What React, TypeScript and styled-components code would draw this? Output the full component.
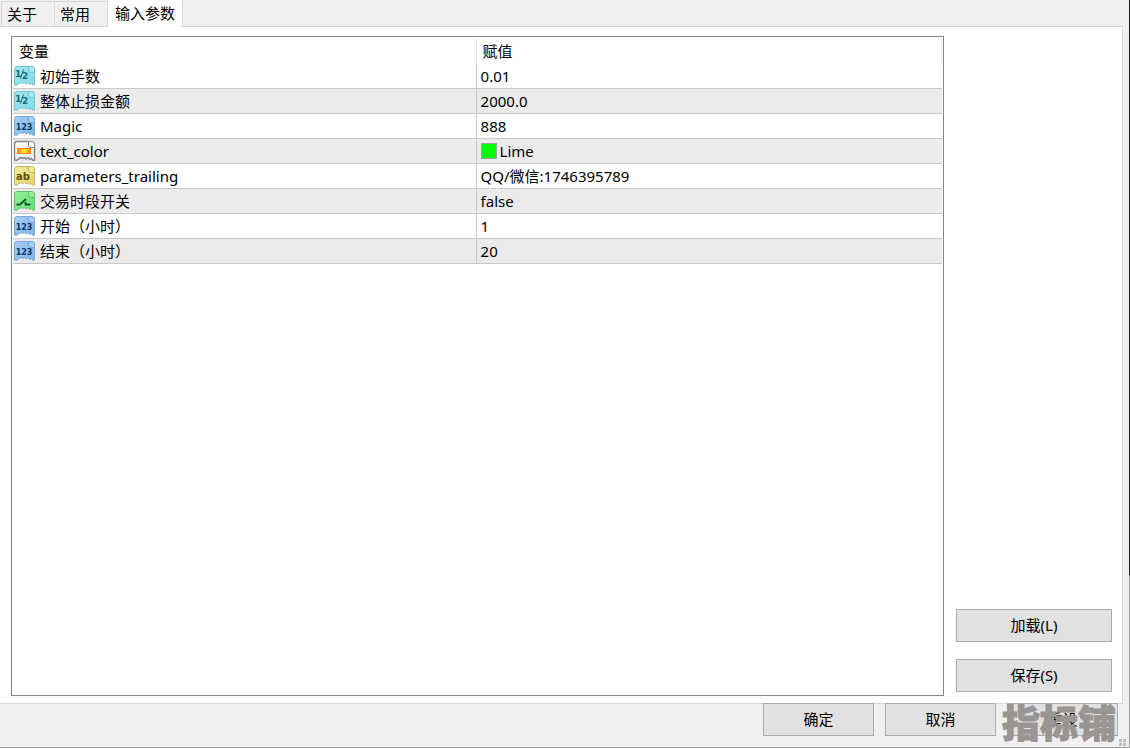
import React from "react";
import styled, { createGlobalStyle, css } from "styled-components";

const GlobalStyle = createGlobalStyle`
  * { box-sizing: border-box; }
  body {
    margin: 0;
    background: #f0f0f0;
    color: #000;
    font: 15px/20px "Noto Sans", "Noto Sans CJK SC", sans-serif;
  }
  button, table { font: inherit; color: inherit; }
`;

const Dialog = styled.main`
  position: relative;
  display: flex;
  flex-direction: column;
  min-height: 100vh;
  overflow: hidden;
  background: #f0f0f0;
  border-bottom: 1px solid #9c9c9c;
`;

const WindowEdge = styled.div`
  position: absolute;
  top: 0;
  right: 0;
  bottom: 0;
  width: 1px;
  background: linear-gradient(#202020 77%, #a0a0a0 77%);
`;

const TabBar = styled.div`
  display: flex;
  align-items: flex-end;
  height: 26px;
  padding-left: 1px;
`;

const Tab = styled.button<{ $active?: boolean }>`
  height: 25px;
  padding: 0 17px 0 5px;
  border: 1px solid #d9d9d9;
  border-width: 1px 0 0 1px;
  background: #f0f0f0;
  line-height: 24px;
  white-space: nowrap;
  ${(p) =>
    p.$active &&
    css`
      position: relative;
      height: 27px;
      margin-bottom: -1px;
      padding: 0 7px 2px;
      border-width: 0 1px 0 1px;
      background: #fff;
    `}
`;

const Panel = styled.section`
  display: flex;
  flex: 1;
  gap: 12px;
  margin-right: 7px;
  padding: 9px 10px 7px 11px;
  border: 1px solid #d9d9d9;
  border-left: 0;
  background: #fff;
`;

const ListBox = styled.div`
  flex: 1;
  padding: 1px;
  border: 1px solid #828790;
`;

const ParamTable = styled.table`
  width: 100%;
  table-layout: fixed;
  border-collapse: separate;
  border-spacing: 0;
  text-align: left;
`;

const HeadCell = styled.th`
  height: 26px;
  padding: 0 6px;
  border-right: 1px solid #e5e5e5;
  font-weight: 400;

  &:first-child {
    width: calc(50% - 1px);
  }
`;

const NameColumn = styled.col`
  width: 49.9%;
`;

const Row = styled.tr`
  &:nth-child(even) { background: #ebebeb; }
`;

const Cell = styled.td`
  height: 25px;
  padding: 0 4px;
  border-bottom: 1px solid #c8c8c8;
`;

const NameCell = styled(Cell)`
  padding: 0 1px;
  border-right: 1px solid #c8c8c8;
`;

const CellContent = styled.div<{ $gap: number }>`
  display: flex;
  align-items: center;
  gap: ${(p) => p.$gap}px;
  height: 24px;
`;

const Swatch = styled.span`
  width: 16px;
  height: 16px;
  border: 1px solid #a0a0a0;
  background: #0f0;
`;

const SideActions = styled.div`
  display: flex;
  flex-direction: column;
  justify-content: flex-end;
  gap: 17px;
  width: 156px;
  padding-bottom: 4px;
`;

const PushButton = styled.button`
  height: 33px;
  padding: 0 8px 2px;
  border: 1px solid #adadad;
  background: #e1e1e1;
`;

const Footer = styled.footer`
  position: relative;
  display: flex;
  justify-content: flex-end;
  gap: 11px;
  height: 44px;
  margin-top: -1px;
  padding-right: 12px;

  ${PushButton} { width: 111px; }
`;

const Watermark = styled.span`
  position: absolute;
  right: 14px;
  bottom: 6px;
  color: #999593;
  font: 900 38px/40px "Noto Sans CJK SC", sans-serif;
  -webkit-text-stroke: 1px #999593;
  pointer-events: none;
`;

const Grip = styled.svg`
  position: absolute;
  right: 4px;
  bottom: 1px;
`;

type Kind = "double" | "int" | "color" | "string" | "bool";

const tones: Record<Kind, { light: string; dark: string; edge: string; ink: string }> = {
  double: { light: "#a4e8f0", dark: "#80d9e6", edge: "#7cc3ce", ink: "#1d6878" },
  int: { light: "#a5cff5", dark: "#7db2e8", edge: "#7ba6d0", ink: "#12365f" },
  color: { light: "#ffffff", dark: "#f2f2f2", edge: "#858585", ink: "#333333" },
  string: { light: "#f3eb9c", dark: "#e3d36a", edge: "#c2b468", ink: "#5f5008" },
  bool: { light: "#93ee9b", dark: "#66df78", edge: "#62bd6e", ink: "#0c5a20" },
};

const IconText = styled.text`
  font-family: "DejaVu Sans", sans-serif;
  font-weight: 700;
`;

function TypeIcon({ kind }: { kind: Kind }) {
  const t = tones[kind];
  return (
    <svg width="22" height="22" viewBox="0 0 22 22" aria-hidden="true">
      <defs>
        <linearGradient id={`paper-${kind}`} x1="0" y1="0" x2="1" y2="1">
          <stop offset="0" stopColor={t.light} />
          <stop offset="1" stopColor={t.dark} />
        </linearGradient>
        <linearGradient id="ember">
          <stop offset="0" stopColor="#f98a00" />
          <stop offset="0.5" stopColor="#fff23c" />
          <stop offset="1" stopColor="#f98a00" />
        </linearGradient>
      </defs>
      <path
        d="M3 1.5H15L20.5 6.5V20L19 20.5L17 18.5L15.5 19.5L14 17.5L12 19L10.5 17.5L8.5 18.5L7 17.5L4.5 19L2 20.5L.5 20V4Q.5 1.5 3 1.5Z"
        fill={`url(#paper-${kind})`}
        stroke={t.edge}
        strokeWidth={kind === "color" ? 1.5 : 1}
      />
      <path d="M14.5 1.5H18Q20.5 1.5 20.5 4V7.5H17Q14.5 7.5 14.5 5Z" fill={t.light} stroke={t.edge} />
      {kind === "double" && (
        <g fill={t.ink}>
          <IconText x="1" y="12" fontSize="9">1</IconText>
          <path d="M9.5 4.5L6.5 13.5" stroke={t.ink} />
          <IconText x="8" y="14" fontSize="9">2</IconText>
        </g>
      )}
      {kind === "int" && (
        <IconText x="10" y="15" fontSize="8" textAnchor="middle" fill={t.ink}>123</IconText>
      )}
      {kind === "color" && (
        <rect x="3.5" y="8.5" width="13" height="5" fill="url(#ember)" stroke="#f57f10" />
      )}
      {kind === "string" && (
        <IconText x="9" y="15" fontSize="10" textAnchor="middle" fill={t.ink}>ab</IconText>
      )}
      {kind === "bool" && (
        <path d="M2.5 14.5H6L12 9M11.5 12V14.5H16.5" fill="none" stroke={t.ink} strokeWidth="1.8" />
      )}
    </svg>
  );
}

const params: { kind: Kind; name: string; value: string }[] = [
  { kind: "double", name: "初始手数", value: "0.01" },
  { kind: "double", name: "整体止损金额", value: "2000.0" },
  { kind: "int", name: "Magic", value: "888" },
  { kind: "color", name: "text_color", value: "Lime" },
  { kind: "string", name: "parameters_trailing", value: "QQ/微信:1746395789" },
  { kind: "bool", name: "交易时段开关", value: "false" },
  { kind: "int", name: "开始（小时）", value: "1" },
  { kind: "int", name: "结束（小时）", value: "20" },
];

export default function App() {
  return (
    <Dialog lang="zh-CN">
      <GlobalStyle />
      <TabBar role="tablist">
        <Tab role="tab" aria-selected="false">关于</Tab>
        <Tab role="tab" aria-selected="false">常用</Tab>
        <Tab role="tab" aria-selected="true" $active>输入参数</Tab>
      </TabBar>
      <Panel>
        <ListBox>
          <ParamTable>
            <colgroup>
              <NameColumn />
              <col />
            </colgroup>
            <thead>
              <tr>
                <HeadCell scope="col">变量</HeadCell>
                <HeadCell scope="col">赋值</HeadCell>
              </tr>
            </thead>
            <tbody>
              {params.map((p) => (
                <Row key={p.name}>
                  <NameCell>
                    <CellContent $gap={4}>
                      <TypeIcon kind={p.kind} />
                      {p.name}
                    </CellContent>
                  </NameCell>
                  <Cell>
                    <CellContent $gap={3}>
                      {p.kind === "color" && <Swatch />}
                      {p.value}
                    </CellContent>
                  </Cell>
                </Row>
              ))}
            </tbody>
          </ParamTable>
        </ListBox>
        <SideActions>
          <PushButton>加载(L)</PushButton>
          <PushButton>保存(S)</PushButton>
        </SideActions>
      </Panel>
      <Footer>
        <PushButton>确定</PushButton>
        <PushButton>取消</PushButton>
        <PushButton>重设</PushButton>
        <Watermark>指标铺</Watermark>
        <Grip width="7" height="7" viewBox="0 0 7 7" fill="#bfbfbf" aria-hidden="true">
          <path d="M0 0h3v3H0zM4 0h3v3H4zM0 4h3v3H0zM4 4h3v3H4z" />
        </Grip>
      </Footer>
      <WindowEdge />
    </Dialog>
  );
}
